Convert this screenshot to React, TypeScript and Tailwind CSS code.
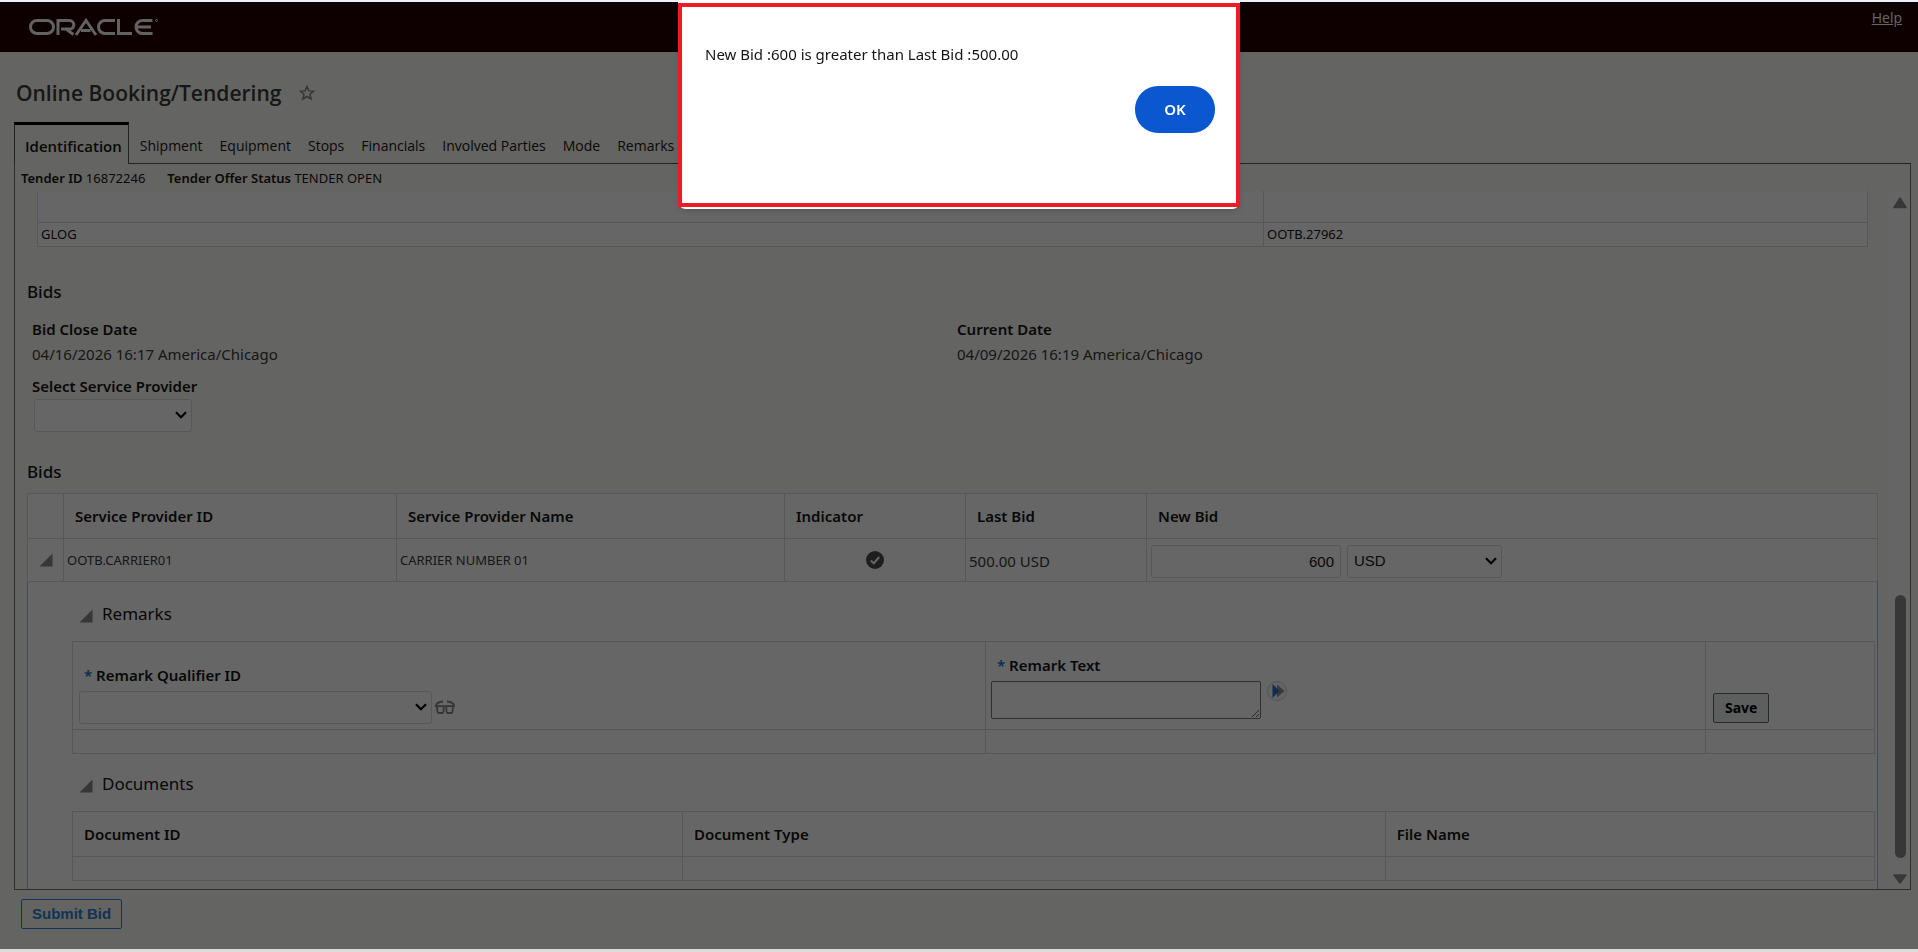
import React, { useState } from "react";

interface Remark {
  qualifier: string;
  text: string;
}

const TABS = [
  "Shipment",
  "Equipment",
  "Stops",
  "Financials",
  "Involved Parties",
  "Mode",
  "Remarks",
];

const OracleLogo = () => (
  <svg width="130" height="18" viewBox="0 0 130 18" fill="none" stroke="#f4f4f4" strokeWidth="3" role="img" aria-label="Oracle">
    <rect x="2.5" y="2.5" width="23" height="13" rx="6.5" />
    <path d="M30 17V2.500H41.500a4.300 4.300 0 0 1 0 8.600H33M38 11.100L45.500 16.500" />
    <path d="M48 17L58 2.500L68 17M53 12.500H62.500" />
    <path d="M87 2.500H77a6.500 6.500 0 0 0 0 13H87" />
    <path d="M90.500 1V15.500H104" />
    <path d="M124.500 2.500H114.500a6.500 6.500 0 0 0 0 13H124.500M108.500 9H123" />
    <circle cx="128.500" cy="2.500" r="1" strokeWidth="1" />
  </svg>
);

const StarIcon = () => (
  <svg width="16" height="16" viewBox="0 0 16 16" fill="none" stroke="#85858f" strokeWidth="1.500">
    <path d="M8 1.500L9.900 5.900L14.600 6.200L11 9.300L12.100 14L8 11.500L3.900 14L5 9.300L1.400 6.200L6.100 5.900Z" />
  </svg>
);

const Disclosure = () => (
  <svg width="14" height="14" viewBox="0 0 14 14">
    <path d="M13.500 0.500V13.500H0.500Z" fill="#8a8a8a" />
  </svg>
);

const CheckIcon = () => (
  <svg width="18" height="18" viewBox="0 0 18 18">
    <circle cx="9" cy="9" r="9" fill="#4c4c4c" />
    <path d="M4.800 9.500L7.800 12.300L13.200 6" fill="none" stroke="#fff" strokeWidth="2" />
  </svg>
);

const GlassesIcon = () => (
  <svg width="20" height="14" viewBox="0 0 20 14" fill="none" stroke="#858585" strokeWidth="1.800">
    <path d="M0 6.200H20M0.800 6.200C1 3.500 3.500 2 8 1.500M19.200 6.200C19 3.500 16.500 2 12 1.500" />
    <path d="M2 6.500L2.400 11.500Q2.600 13 4 13H7Q8.400 13 8.500 11.500L8.800 6.500M18 6.500L17.600 11.500Q17.400 13 16 13H13Q11.600 13 11.500 11.500L11.200 6.500" />
  </svg>
);

const ForwardIcon = () => (
  <svg width="20" height="20" viewBox="0 0 20 20">
    <circle cx="10" cy="10" r="9.500" fill="#fafafa" stroke="#d0d0d0" />
    <path d="M10 3.500L17.500 10L10 16.500Z" fill="#8f8f8f" />
    <path d="M5.500 3L12.500 10L5.500 17Z" fill="#2f6fc0" />
  </svg>
);

const Chevron = () => (
  <svg className="pointer-events-none absolute right-[5px] top-1/2 -translate-y-1/2" width="12" height="8" viewBox="0 0 12 8" fill="none" stroke="#000" strokeWidth="2.200">
    <path d="M1 1.300L6 6.300L11 1.300" />
  </svg>
);

const SelectBox = ({ id, label, options, width }: { id: string; label: string; options: string[]; width: string }) => (
  <div className={`relative ${width}`}>
    <select
      id={id}
      aria-label={label}
      className="block h-[33px] w-full appearance-none rounded-[3px] border border-[#dadada] bg-white pl-1.5 text-[15px] leading-5 text-[#161513]"
    >
      {options.map((o) => (
        <option key={o}>{o}</option>
      ))}
    </select>
    <Chevron />
  </div>
);

export default function App() {
  const [open, setOpen] = useState(true);
  const [newBid, setNewBid] = useState("600");
  const [remark, setRemark] = useState<Remark>({ qualifier: "", text: "" });

  const cell = "border border-[#d6d9e0]";
  const head = "border border-[#d6d9e0] px-[11px] pt-0.5 text-left font-semibold";

  return (
    <div className="flex h-screen flex-col overflow-hidden bg-[#dcdcdc] font-['Noto_Sans','Open_Sans',sans-serif] text-[#161513]">
      <div className="h-[2px] shrink-0 bg-[#e9f1fd]" />
      <div className="relative mb-[3px] flex min-h-0 flex-1 flex-col bg-[#fbf9f5]">
        <header className="flex h-[50px] shrink-0 items-start justify-between bg-[#240000] pl-7 pr-4">
          <div className="pt-4">
            <OracleLogo />
          </div>
          <a href="#help" className="pt-1.5 font-['Open_Sans',sans-serif] text-sm text-white underline">
            Help
          </a>
        </header>

        <div className="flex h-[70px] shrink-0 items-end gap-[18px] pb-[13px] pl-4">
          <h1 className="font-['Open_Sans',sans-serif] text-[21px] font-semibold leading-8 text-[#3a3a3a]">Online Booking/Tendering</h1>
          <div className="pb-2">
            <StarIcon />
          </div>
        </div>

        <main className="ml-[14px] mr-[7px] flex min-h-0 flex-1 flex-col">
          <nav className="flex h-[42px] shrink-0 font-['Open_Sans',sans-serif] text-sm">
            <a href="#identification" className="flex items-center border-x border-t-[3px] border-x-[#555] border-t-black pl-[10px] pr-[6px] pt-1 text-[15px] font-semibold">
              Identification
            </a>
            <div className="flex flex-1 items-center gap-[17px] border-b border-[#555] pl-[11px] pt-1.5">
              {TABS.map((t) => (
                <a key={t} href={`#${t}`}>
                  {t}
                </a>
              ))}
            </div>
          </nav>

          <div className="flex min-h-0 flex-1 flex-col border border-t-0 border-[#777]">
            <div className="flex h-[27px] shrink-0 items-center gap-[22px] pl-1.5 text-[13px] leading-5">
              <p>
                <span className="font-semibold">Tender ID</span> 16872246
              </p>
              <p>
                <span className="font-semibold">Tender Offer Status</span> TENDER OPEN
              </p>
            </div>

            <div className="flex min-h-0 flex-1">
              <div className="min-w-0 flex-1 overflow-hidden pl-3 pr-[10px]">
                <div className="pl-[10px] pr-[10px]">
                  <table className="w-full table-fixed border-collapse bg-white text-[13px]">
                    <colgroup>
                      <col className="w-[67%]" />
                      <col />
                    </colgroup>
                    <tbody>
                      <tr className="h-[31px]">
                        <td className="border border-t-0 border-[#d6d9e0]" />
                        <td className="border border-t-0 border-[#d6d9e0]" />
                      </tr>
                      <tr className="h-6">
                        <td className={`${cell} pl-[3px] pt-0.5`}>GLOG</td>
                        <td className={`${cell} pl-[3px] pt-0.5`}>OOTB.27962</td>
                      </tr>
                    </tbody>
                  </table>
                </div>

                <h2 className="mt-[33px] text-[17px] font-medium leading-6">Bids</h2>
                <div className="mt-[13px] grid grid-cols-2 gap-1 pl-[5px] text-[15px] leading-[25px]">
                  <div>
                    <p className="font-semibold">Bid Close Date</p>
                    <p className="text-[#3a3a3a]">04/16/2026 16:17 America/Chicago</p>
                  </div>
                  <div>
                    <p className="font-semibold">Current Date</p>
                    <p className="text-[#3a3a3a]">04/09/2026 16:19 America/Chicago</p>
                  </div>
                </div>
                <div className="mt-1.5 pl-[5px]">
                  <label htmlFor="provider" className="block text-[15px] font-semibold leading-[26px]">
                    Select Service Provider
                  </label>
                  <div className="pl-0.5">
                    <SelectBox id="provider" label="Select Service Provider" options={[""]} width="w-[158px]" />
                  </div>
                </div>

                <h2 className="mt-7 text-[17px] font-medium leading-6">Bids</h2>
                <table className="mt-[9px] w-full table-fixed border-collapse bg-white text-[15px]">
                  <colgroup>
                    <col className="w-[36px]" />
                    <col className="w-[18%]" />
                    <col className="w-[388px]" />
                    <col className="w-[181px]" />
                    <col className="w-[181px]" />
                    <col />
                  </colgroup>
                  <thead>
                    <tr className="h-[45px]">
                      <th className={cell} />
                      <th className={head}>Service Provider ID</th>
                      <th className={head}>Service Provider Name</th>
                      <th className={head}>Indicator</th>
                      <th className={head}>Last Bid</th>
                      <th className={head}>New Bid</th>
                    </tr>
                  </thead>
                  <tbody>
                    <tr className="h-[43px]">
                      <td className={cell}>
                        <button aria-label="Collapse bid" className="block pl-[11px]">
                          <Disclosure />
                        </button>
                      </td>
                      <td className={`${cell} pl-[3px] pt-0.5 text-[13px] text-[#3a3a3a]`}>OOTB.CARRIER01</td>
                      <td className={`${cell} pl-[3px] pt-0.5 text-[13px] text-[#3a3a3a]`}>CARRIER NUMBER 01</td>
                      <td className={cell}>
                        <div className="flex justify-center">
                          <CheckIcon />
                        </div>
                      </td>
                      <td className={`${cell} pl-[3px] pt-1 text-[#3a3a3a]`}>500.00 USD</td>
                      <td className={`${cell} pt-[3px]`}>
                        <div className="flex gap-[6px] pl-1 font-['Liberation_Sans',sans-serif]">
                          <input
                            aria-label="New Bid"
                            value={newBid}
                            onChange={(e) => setNewBid(e.target.value)}
                            className="h-[33px] w-[190px] rounded-[3px] border border-[#dadada] px-1.5 text-right text-[15px]"
                          />
                          <SelectBox id="currency" label="Currency" options={["USD", "EUR"]} width="w-[155px]" />
                        </div>
                      </td>
                    </tr>
                  </tbody>
                </table>

                <section className="h-[400px] border-x border-[#98bde6] bg-white pl-11 pr-0.5">
                  <div className="flex items-center gap-[9px] pl-[7px] pt-5">
                    <button aria-label="Collapse remarks" className="pt-1">
                      <Disclosure />
                    </button>
                    <h3 className="text-[17px] leading-6">Remarks</h3>
                  </div>
                  <table className="mt-[15px] w-full table-fixed border-collapse text-[15px]">
                    <colgroup>
                      <col />
                      <col className="w-[720px]" />
                      <col className="w-[169px]" />
                    </colgroup>
                    <tbody>
                      <tr className="h-[88px]">
                        <td className={`${cell} px-1.5 pb-[5px] align-bottom`}>
                          <label htmlFor="qualifier" className="block pb-1 pl-[5px] font-semibold leading-6">
                            <span className="text-[#0572ce]">*</span> Remark Qualifier ID
                          </label>
                          <div className="flex items-center gap-[3px]">
                            <SelectBox id="qualifier" label="Remark Qualifier ID" options={[remark.qualifier]} width="w-[353px]" />
                            <GlassesIcon />
                          </div>
                        </td>
                        <td className={`${cell} px-[5px] pb-[10px] align-bottom`}>
                          <label htmlFor="remark" className="block pb-1 pl-[6px] font-semibold leading-6">
                            <span className="text-[#0572ce]">*</span> Remark Text
                          </label>
                          <div className="flex items-start gap-[6px]">
                            <textarea
                              id="remark"
                              value={remark.text}
                              onChange={(e) => setRemark({ ...remark, text: e.target.value })}
                              className="h-[38px] w-[270px] rounded-[2px] border border-[#767676]"
                            />
                            <button aria-label="Expand remark text">
                              <ForwardIcon />
                            </button>
                          </div>
                        </td>
                        <td className={`${cell} px-[7px] pb-[6px] align-bottom`}>
                          <button className="block h-[30px] rounded-[2px] border border-[#666] bg-[#e8ecec] px-[11px] text-[14px] font-bold text-black">
                            Save
                          </button>
                        </td>
                      </tr>
                      <tr className="h-6">
                        <td className={cell} />
                        <td className={cell} />
                        <td className={cell} />
                      </tr>
                    </tbody>
                  </table>

                  <div className="flex items-center gap-[9px] pl-[7px] pt-[18px]">
                    <button aria-label="Collapse documents" className="pt-1">
                      <Disclosure />
                    </button>
                    <h3 className="text-[17px] leading-6">Documents</h3>
                  </div>
                  <table className="mt-[15px] w-full table-fixed border-collapse text-[15px]">
                    <colgroup>
                      <col className="w-[610px]" />
                      <col className="w-[39%]" />
                      <col />
                    </colgroup>
                    <thead>
                      <tr className="h-[45px]">
                        <th className={head}>Document ID</th>
                        <th className={head}>Document Type</th>
                        <th className={head}>File Name</th>
                      </tr>
                    </thead>
                    <tbody>
                      <tr className="h-6">
                        <td className={cell} />
                        <td className={cell} />
                        <td className={cell} />
                      </tr>
                    </tbody>
                  </table>
                </section>
              </div>

              {/* scroll rail */}
              <div className="flex w-[22px] shrink-0 flex-col items-center bg-[#fcfcfc] py-1 pl-0.5">
                <svg width="16" height="14" viewBox="0 0 16 14">
                  <path d="M8 3L14 12.500H2Z" fill="#8b8b8b" stroke="#8b8b8b" strokeWidth="1.500" strokeLinejoin="round" />
                </svg>
                <div className="flex flex-1 flex-col justify-end pb-[13px]">
                  <div className="h-[263px] w-[11px] rounded-full bg-[#8b8b8b]" />
                </div>
                <svg width="16" height="14" viewBox="0 0 16 14">
                  <path d="M8 12L14 4H2Z" fill="#8b8b8b" stroke="#8b8b8b" strokeWidth="1.500" strokeLinejoin="round" />
                </svg>
              </div>
            </div>
          </div>
        </main>

        <footer className="h-[59px] shrink-0 pl-[21px] pt-[9px]">
          <button className="h-[30px] rounded-[2px] border border-[#2f7fd0] px-[10px] font-['Liberation_Sans',sans-serif] text-[15px] font-bold text-[#2f7fd0]">
            Submit Bid
          </button>
        </footer>

        {open && <div className="absolute inset-0 bg-black/60" />}
      </div>

      {open && (
        <div role="alertdialog" className="fixed left-1/2 top-0 w-[562px] -translate-x-1/2 rounded-b-lg bg-white pb-[2px] pt-[3px] shadow-md">
          <div className="h-[204px] border-4 border-[#ed1c24] pl-[23px] pr-[21px] pt-[35px]">
            <p className="text-[15px] leading-6">New Bid :600 is greater than Last Bid :500.00</p>
            <div className="flex justify-end pt-5">
              <button
                onClick={() => setOpen(false)}
                className="h-[47px] w-20 rounded-[23px] bg-[#0b57d0] text-[15px] font-semibold text-white"
              >
                OK
              </button>
            </div>
          </div>
        </div>
      )}
    </div>
  );
}
